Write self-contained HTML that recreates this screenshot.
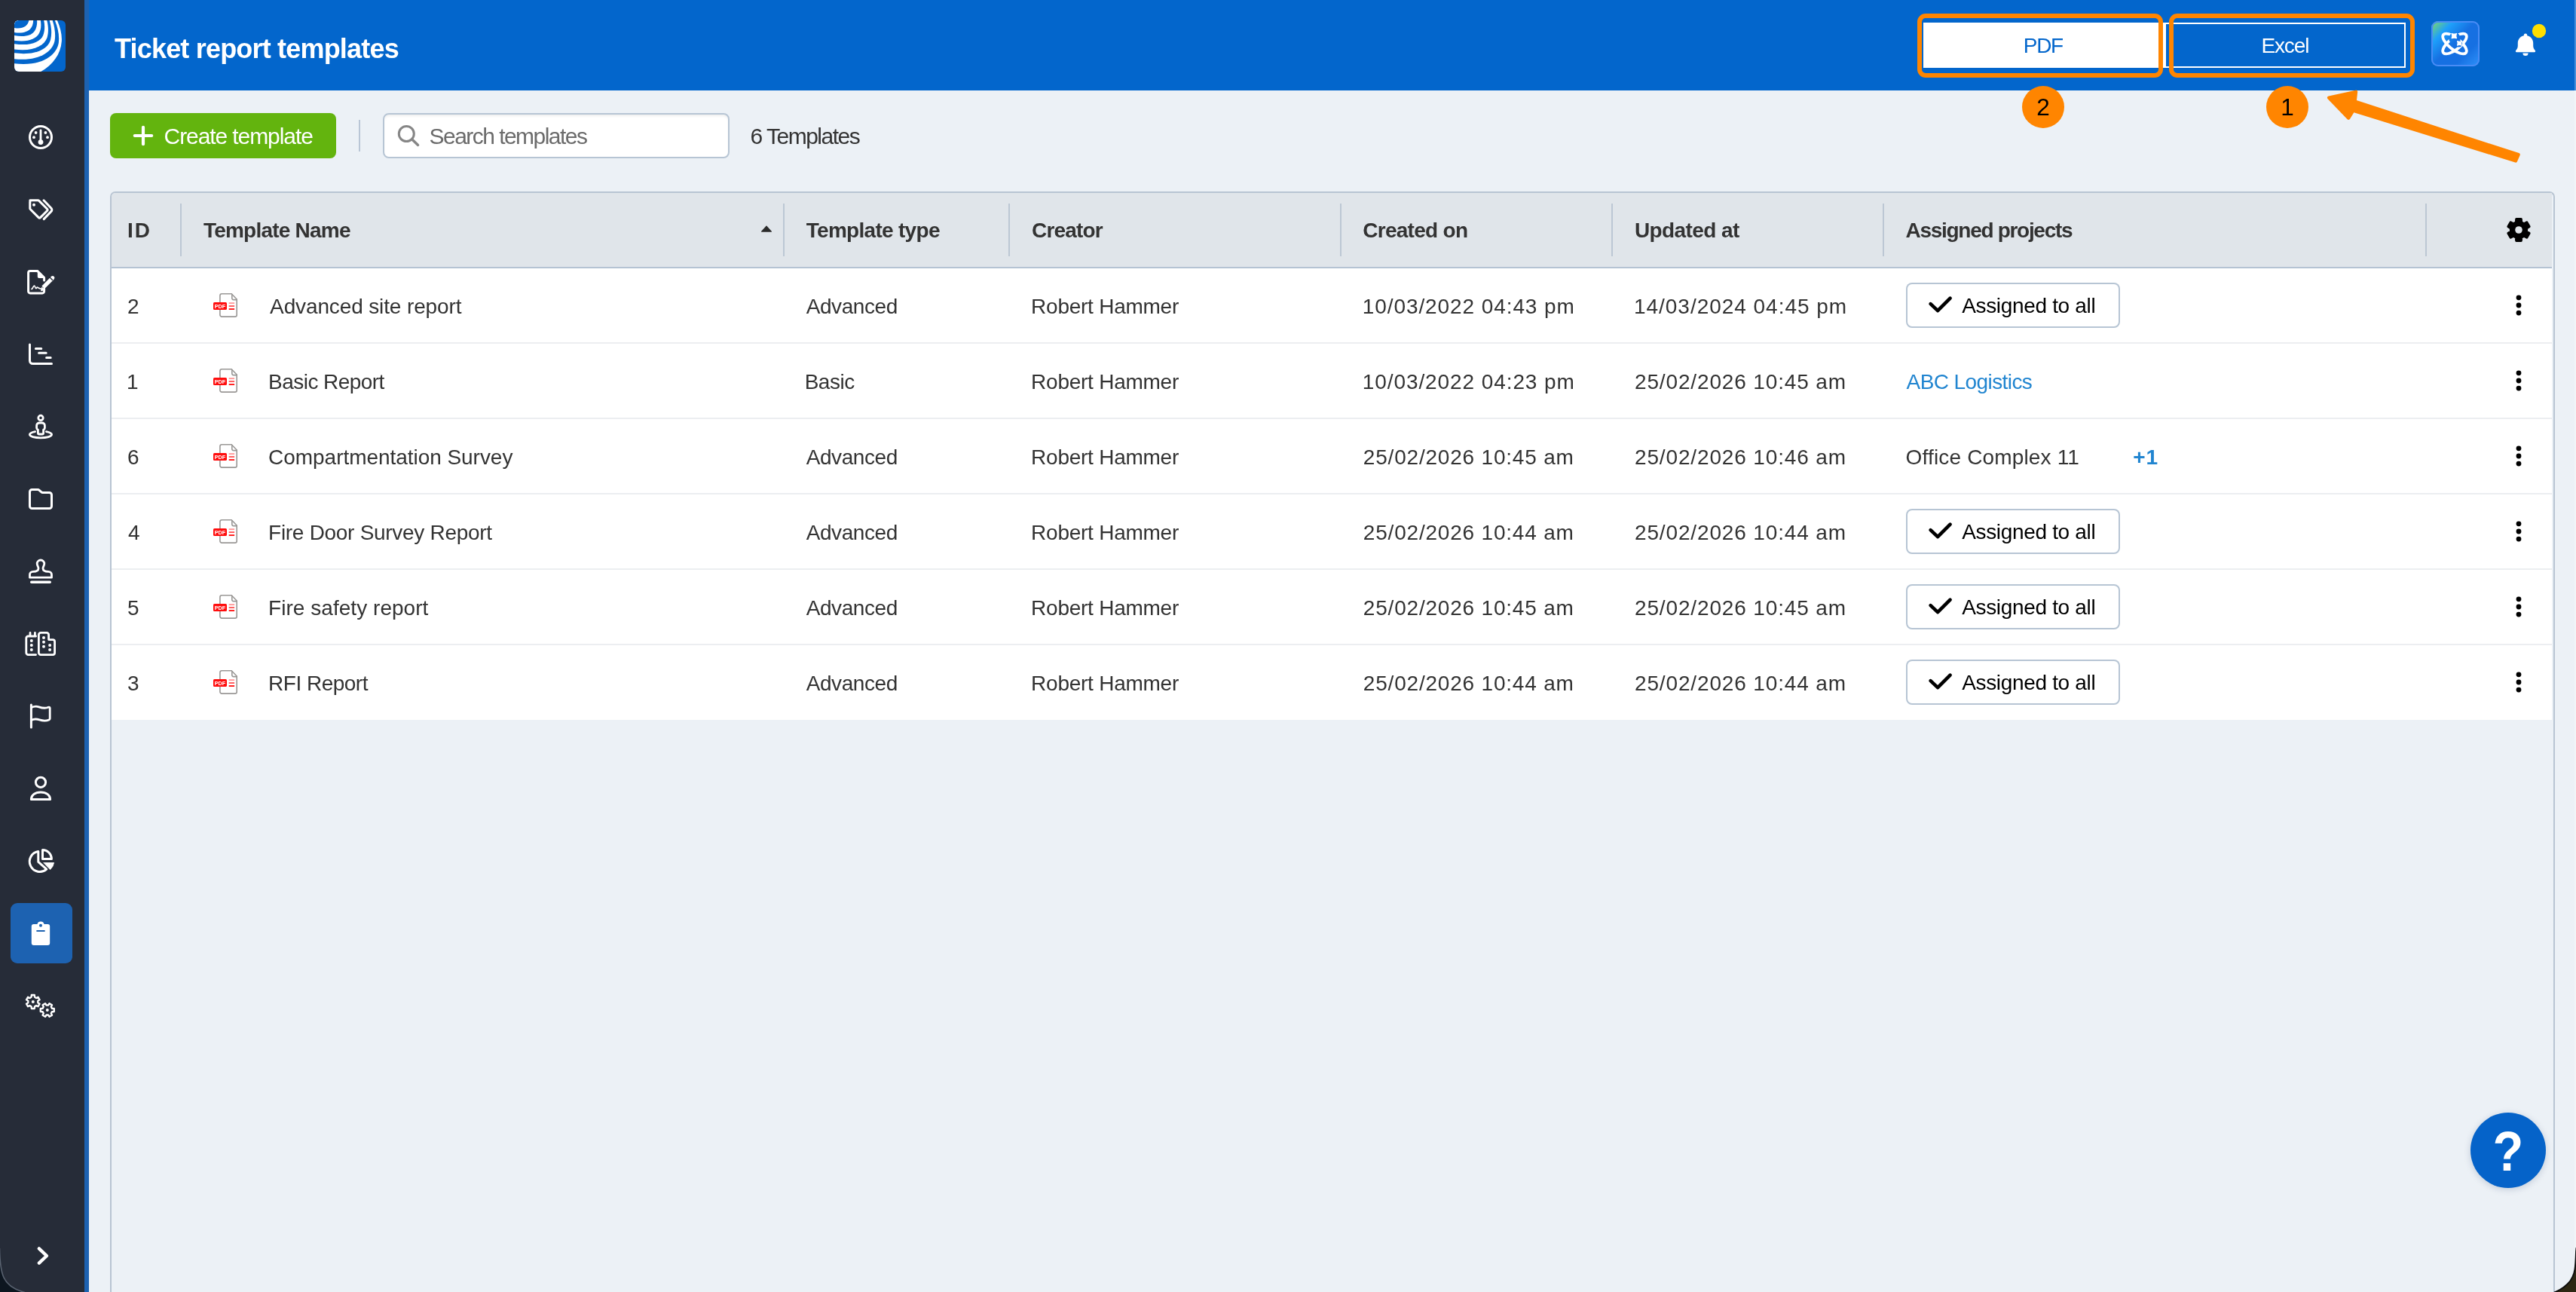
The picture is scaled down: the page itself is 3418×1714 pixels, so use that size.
<!DOCTYPE html>
<html lang="en"><head><meta charset="utf-8"><title>Ticket report templates</title>
<style>
html,body{margin:0;padding:0}
html{width:3418px;height:1714px;overflow:hidden;background:#ecf1f6}
body{width:3418px;height:1714px;position:relative;overflow:hidden;will-change:transform;background:#ecf1f6;font-family:"Liberation Sans",sans-serif}
button{appearance:none;-webkit-appearance:none;border:0;margin:0;padding:0;background:none;font:inherit;color:inherit;text-align:left;position:absolute;display:block;cursor:pointer}
h1{margin:0}
a{text-decoration:none}
main,.toolbar,.ni,.toggle{display:contents}
.a{position:absolute;display:block}
.t{position:absolute;white-space:nowrap;line-height:1;display:block}
#sidebar{left:0;top:0;width:112px;height:1714px;background:#262c38}
#strip{left:112px;top:0;width:6px;height:1714px;background:#1d62b1}
#header{left:118px;top:0;width:3300px;height:120px;background:#0366cc}
#active{left:14px;top:1198px;width:82px;height:80px;border-radius:9px;background:#1d62b1}
#createbtn{left:146px;top:150px;width:300px;height:60px;border-radius:8px;background:#63b40e}
#divider{left:476px;top:159px;width:2px;height:42px;background:#b9c6d6}
#searchbox{left:508px;top:150px;width:460px;height:60px;box-sizing:border-box;border:2px solid #b7c5d4;border-radius:8px;background:#fff;box-shadow:inset 0 3px 4px -2px rgba(0,0,0,.10)}
#q{position:absolute;left:0;top:0;width:456px;height:56px;box-sizing:border-box;border:0;margin:0;padding:0 0 0 60px;background:transparent;outline:0;font:inherit;font-size:30px;color:#333}
#frame{left:146px;top:254px;width:3244px;height:1460px;box-sizing:border-box;border:2px solid #b8c4d2;border-bottom:0;border-radius:7px 7px 0 0}
#thead{left:0;top:0;width:3238px;height:98px;background:#e0e5ea;border-radius:5px 0 0 0}
#theadline{left:0;top:98px;width:3238px;height:2px;background:#b5c3d3}
#tbody{left:0;top:100px;width:3238px;height:599px;background:#fff}
.tr{position:absolute;left:0;width:3238px;height:100px;box-sizing:border-box;border-bottom:2px solid #eceef1}
.tr.last{height:99px;border-bottom:0}
.cs{position:absolute;top:14px;width:2px;height:70px;background:#bcc7d4}
.abtn{width:284px;height:60px;border-radius:8px;background:#fff;box-shadow:inset 0 0 0 2px #b7c5d4}
.kebab{width:20px;height:40px}
#cfg{left:3174px;top:29px;width:40px;height:40px}
#pdfbtn{left:2434px;top:30px;width:320px;height:60px;background:#fff}
#excelbtn{left:2754px;top:30px;width:320px;height:60px;box-shadow:inset 0 0 0 2px #fff}
#aibtn{left:3108px;top:28px;width:64px;height:60px;border-radius:9px;box-shadow:inset 0 0 0 2px #4a8cf5;background:linear-gradient(135deg,#86dd5e 0%,#1ea0fb 24%,#1670e2 48%,#1670e2 72%,#2f93fb 100%)}
#bell{left:3216px;top:30px;width:48px;height:50px}
.obox{position:absolute;top:18px;width:326px;height:85px;box-sizing:border-box;border:6px solid #ff8500;border-radius:11px}
.badge{position:absolute;top:114px;width:56px;height:56px;border-radius:50%;background:#ff8500;color:#000;font-size:31.5px;line-height:57px;text-align:center}
#help{left:3278px;top:1476px;width:100px;height:100px;border-radius:50%;background:#0563c9;box-shadow:0 2px 10px rgba(0,40,90,.18);color:#fff;font-weight:700;font-size:75px;line-height:102px;text-align:center}
#help span{display:inline-block;transform:scaleX(.89)}
#redge{left:3416px;top:0;width:2px;height:1714px;background:rgba(255,255,255,.27)}
</style></head>
<body>

<nav class="a" id="sidebar" aria-label="Main navigation">
<a class="ni" aria-label="Home">
<svg class="a" style="left:19px;top:27px" width="68" height="68" viewBox="0 0 68 68" role="img" aria-label="Logo">
<defs><clipPath id="lc"><rect x="0" y="0" width="68" height="68" rx="6"/></clipPath></defs>
<g clip-path="url(#lc)">
<rect width="68" height="68" fill="#0366cc"/>
<path d="M56.5 -1C61 9 63.5 19 62.8 28C61.5 46 50 60 33.5 69L-1 69L-1 -1Z" fill="#fff"/>
<path d="M53.4 -1C58 10 60 20 58.8 30C56.5 44 40 62 -1 57.1L-1 -1Z" fill="#0366cc"/>
<path d="M50.3 -1C54 10 55 20 53.4 28C50 42 32 55 -1 51.2L-1 -1Z" fill="#fff"/>
<path d="M46.4 -1C49.5 9 50 18 48 26C44 39 27 47 -1 43.2L-1 -1Z" fill="#0366cc"/>
<path d="M43 -1C45.5 8 45.5 16 43.5 23C39.5 34 24 42 -1 38.3L-1 -1Z" fill="#fff"/>
<path d="M39 -1C40.8 7 40.5 14 38.2 20C34 29.5 20 34.5 -1 31L-1 -1Z" fill="#0366cc"/>
<path d="M34.6 -1C36 6 35.5 12 33 17C29 25 17 29.5 -1 26.5L-1 -1Z" fill="#fff"/>
<path d="M30 -1C30.6 5 29.6 10 27 14C23 20 13 23 -1 19.8L-1 -1Z" fill="#0366cc"/>
<path d="M25.2 -1C25.2 4 24 8 21.5 11C17.5 15.5 9 18 -1 15.7L-1 -1Z" fill="#fff"/>
<path d="M19.6 -1C19 3 17.5 5.5 15 7.5C11 10.5 5 11.2 -1 9.7L-1 -1Z" fill="#0366cc"/>
</g></svg></a>
<a class="ni" aria-label="Dashboard"><svg class="a" style="left:32.0px;top:160.0px" width="44" height="44" viewBox="-22.0 -22.0 44 44" fill="none" stroke="#fff" stroke-width="3" stroke-linecap="round" stroke-linejoin="round"><circle cx="0" cy="0" r="14.5"/>
<path d="M0 -9.2V5" stroke-width="2.8"/><circle cx="0" cy="6.6" r="3.4" fill="#fff" stroke="none"/>
<g fill="#fff" stroke="none"><circle cx="-6.4" cy="-6" r="1.9"/><circle cx="6.4" cy="-6" r="1.9"/><circle cx="-9" cy="0.2" r="1.9"/><circle cx="9" cy="0.2" r="1.9"/></g></svg></a>
<a class="ni" aria-label="Tickets"><svg class="a" style="left:32.0px;top:256.0px" width="44" height="44" viewBox="-22.0 -22.0 44 44" fill="none" stroke="#fff" stroke-width="3" stroke-linecap="round" stroke-linejoin="round"><path d="M-14 -12h10.6a2 2 0 0 1 1.4 .6l10.6 10.6a2 2 0 0 1 0 2.8l-8.6 8.6a2 2 0 0 1 -2.8 0l-10.6 -10.6a2 2 0 0 1 -.6 -1.4v-8.600a2 2 0 0 1 2 -2z" transform="translate(-.2,-.2)"/>
<path d="M4 -12.2l10 10.4a3 3 0 0 1 0 4.200l-9.800 10.200"/>
<circle cx="-9" cy="-6.200" r="2" fill="#fff" stroke="none"/></svg></a>
<a class="ni" aria-label="Documents"><svg class="a" style="left:32.0px;top:352.0px" width="44" height="44" viewBox="-22.0 -22.0 44 44" fill="none" stroke="#fff" stroke-width="3" stroke-linecap="round" stroke-linejoin="round"><path d="M4.600 9v3.600a2.400 2.400 0 0 1 -2.400 2.400h-16.200a2.400 2.400 0 0 1 -2.400 -2.400v-24.800a2.400 2.400 0 0 1 2.400 -2.400h9.600l9 9v3.600"/>
<path d="M-4.200 -14.800v7.800a2 2 0 0 0 2 2h7.800z" fill="#fff" stroke="none"/>
<path d="M-12 9.400c1.600 0 2 -4.400 3.400 -4.400 1.200 0 1.200 3.600 2.400 3.600 .8 0 .8 -1.400 1.800 -1.400 .9 0 1.400 1.800 4.800 1.800" stroke-width="1.700"/>
<g transform="translate(0,1.500)"><path d="M3.200 5.800l11.200 -11.200" stroke-width="5.200" stroke-linecap="butt"/>
<path d="M14.200 -5.200l1.600 -1.600" stroke-width="5.200" stroke-linecap="round"/>
<path d="M12.200 -7.400l3.800 3.800" stroke="#262c38" stroke-width="1.400" stroke-linecap="butt"/>
<path d="M0.600 9.800l1 -4.200 3.400 3.400z" fill="#fff" stroke="#fff" stroke-width="1"/></g></svg></a>
<a class="ni" aria-label="Schedule"><svg class="a" style="left:32.0px;top:448.0px" width="44" height="44" viewBox="-22.0 -22.0 44 44" fill="none" stroke="#fff" stroke-width="3" stroke-linecap="round" stroke-linejoin="round"><path d="M-14.500 -13v21.500a4 4 0 0 0 4 4h25"/>
<path d="M-6.600 -7.500h7.400M-2.400 -1.700h9.600M7.600 4.400h5.600" stroke-width="3"/></svg></a>
<a class="ni" aria-label="Site view"><svg class="a" style="left:32.0px;top:544.0px" width="44" height="44" viewBox="-22.0 -22.0 44 44" fill="none" stroke="#fff" stroke-width="3" stroke-linecap="round" stroke-linejoin="round"><circle cx="0" cy="-11.600" r="3.200" stroke-width="2.800"/>
<path d="M-5.400 -1.400a3.600 3.600 0 0 1 3.600 -3.600h3.600a3.600 3.600 0 0 1 3.600 3.600v3.200a2.600 2.600 0 0 1 -1.800 2.400v4.200a1.600 1.600 0 0 1 -1.600 1.600h-4a1.600 1.600 0 0 1 -1.600 -1.600v-4.200a2.600 2.600 0 0 1 -1.800 -2.400z" stroke-width="2.800"/>
<path d="M-7.400 6.600c-4.200 .8 -7.200 2.200 -7.200 4 0 2.400 6.500 4.200 14.600 4.200s14.600 -1.800 14.600 -4.200c0 -1.800 -3 -3.200 -7.200 -4" stroke-width="2.800"/></svg></a>
<a class="ni" aria-label="Projects"><svg class="a" style="left:32.0px;top:640.0px" width="44" height="44" viewBox="-22.0 -22.0 44 44" fill="none" stroke="#fff" stroke-width="3" stroke-linecap="round" stroke-linejoin="round"><path d="M-14.500 -9.500a3 3 0 0 1 3 -3h7.600a3 3 0 0 1 2 .8l2.600 2.400a3 3 0 0 0 2 .8h8.800a3 3 0 0 1 3 3v15a3 3 0 0 1 -3 3h-23a3 3 0 0 1 -3 -3z"/></svg></a>
<a class="ni" aria-label="Approvals"><svg class="a" style="left:32.0px;top:736.0px" width="44" height="44" viewBox="-22.0 -22.0 44 44" fill="none" stroke="#fff" stroke-width="3" stroke-linecap="round" stroke-linejoin="round"><path d="M-10.500 0.400c5.500 0 7.500 -1.600 7.500 -4.400 0 -2.200 -1.800 -3.600 -1.800 -6.200a4.800 4.800 0 0 1 9.600 0c0 2.600 -1.800 4 -1.800 6.200 0 2.800 2 4.400 7.500 4.400a4 4 0 0 1 4 4v3.800h-29v-3.800a4 4 0 0 1 4 -4z" stroke-width="2.800"/>
<path d="M-12.200 14.200h24.400" stroke-width="3.600"/></svg></a>
<a class="ni" aria-label="Companies"><svg class="a" style="left:32.0px;top:832.0px" width="44" height="44" viewBox="-22.0 -22.0 44 44" fill="none" stroke="#fff" stroke-width="3" stroke-linecap="round" stroke-linejoin="round"><path d="M-6.400 14.600h-10.200a2.600 2.600 0 0 1 -2.600 -2.600v-19.400a2.600 2.600 0 0 1 2.600 -2.600h10.200M-14 -10v-4.600M-7.600 -10v-4.600" stroke-width="2.800"/>
<path d="M-2.600 -12a2.600 2.600 0 0 1 2.600 -2.600h8a2.600 2.600 0 0 1 2.600 2.600v6.600h5.400a2.600 2.600 0 0 1 2.600 2.600v14.800a2.600 2.600 0 0 1 -2.600 2.600h-16a2.600 2.600 0 0 1 -2.600 -2.600z" stroke-width="2.800"/>
<g fill="#fff" stroke="none"><circle cx="-12.200" cy="-4" r="2"/><circle cx="-12.200" cy="2" r="2"/><circle cx="-12.200" cy="8" r="2"/><circle cx="4" cy="-8" r="2"/><circle cx="4" cy="-2.300" r="2"/><circle cx="4" cy="3.800" r="2"/><circle cx="12.100" cy="2" r="2"/><circle cx="12.100" cy="8" r="2"/></g></svg></a>
<a class="ni" aria-label="Reports"><svg class="a" style="left:32.0px;top:928.0px" width="44" height="44" viewBox="-22.0 -22.0 44 44" fill="none" stroke="#fff" stroke-width="3" stroke-linecap="round" stroke-linejoin="round"><path d="M-12.600 -15v30"/>
<path d="M-12.600 -11.400c3.200 -1.400 6.600 -2 10.200 -.8 3.800 1.300 7.800 2.600 12.600 .4a1.400 1.400 0 0 1 2 1.200v13.800a2 2 0 0 1 -1.200 1.800c-4.800 2 -8.800 1.200 -12.600 -.1 -3.600 -1.200 -7.200 -1.400 -11 .5" stroke-width="2.800"/></svg></a>
<a class="ni" aria-label="Users"><svg class="a" style="left:32.0px;top:1024.0px" width="44" height="44" viewBox="-22.0 -22.0 44 44" fill="none" stroke="#fff" stroke-width="3" stroke-linecap="round" stroke-linejoin="round"><circle cx="0" cy="-8.200" r="6.600"/>
<path d="M-12.600 14.500c0 -5.400 5 -9.600 12.600 -9.600s12.600 4.200 12.600 9.600z"/></svg></a>
<a class="ni" aria-label="Statistics"><svg class="a" style="left:32.0px;top:1120.0px" width="44" height="44" viewBox="-22.0 -22.0 44 44" fill="none" stroke="#fff" stroke-width="3" stroke-linecap="round" stroke-linejoin="round"><path d="M-3.2 -12.5A13.6 13.6 0 1 0 7.8 11.2L-3.2 1.4Z" stroke-width="3"/>
<path d="M2.5 -2.6V-14.5A11.9 11.9 0 0 1 14.4 -2.6Z" stroke-width="3"/>
<path d="M4.1 2.5H17.6A15.6 15.6 0 0 1 12.8 11.4Z" fill="#fff" stroke-width=".8"/></svg></a>
<a class="ni" aria-label="Report templates" aria-current="page">
<span class="a" id="active"></span>
<svg class="a" style="left:34px;top:1218px" width="40" height="40" viewBox="0 0 40 40">
<path d="M10.8 8h4.6a4.8 4.8 0 0 1 9.2 0h4.6a3 3 0 0 1 3 3v22a3 3 0 0 1 -3 3h-18.4a3 3 0 0 1 -3 -3v-22a3 3 0 0 1 3 -3z" fill="#fff"/>
<circle cx="20" cy="9.8" r="2" fill="#1d62b1"/><rect x="14.4" y="16" width="11.2" height="2" fill="#1d62b1"/></svg></a>
<a class="ni" aria-label="Settings"><svg class="a" style="left:30.0px;top:1310.0px" width="48" height="48" viewBox="-24.0 -24.0 48 48" fill="none" stroke="#fff" stroke-width="3" stroke-linecap="round" stroke-linejoin="round"><path d="M-12.40 -11.22 L-12.19 -13.98 L-8.21 -13.98 L-8.00 -11.22 L-5.91 -10.02 L-3.41 -11.21 L-1.43 -7.77 L-3.71 -6.20 L-3.71 -3.80 L-1.43 -2.23 L-3.41 1.21 L-5.91 0.02 L-8.00 1.22 L-8.21 3.98 L-12.19 3.98 L-12.40 1.22 L-14.49 0.02 L-16.99 1.21 L-18.97 -2.23 L-16.69 -3.80 L-16.69 -6.20 L-18.97 -7.77 L-16.99 -11.21 L-14.49 -10.02Z" stroke-width="2.400"/><circle cx="-10.200" cy="-5" r="2" fill="#fff" stroke="none"/>
<path d="M6.60 -0.22 L6.81 -2.98 L10.79 -2.98 L11.00 -0.22 L13.09 0.98 L15.59 -0.21 L17.57 3.23 L15.29 4.80 L15.29 7.20 L17.57 8.77 L15.59 12.21 L13.09 11.02 L11.00 12.22 L10.79 14.98 L6.81 14.98 L6.60 12.22 L4.51 11.02 L2.01 12.21 L0.03 8.77 L2.31 7.20 L2.31 4.80 L0.03 3.23 L2.01 -0.21 L4.51 0.98Z" stroke-width="2.400" transform="rotate(30 8.800 6)"/><circle cx="8.800" cy="6" r="2" fill="#fff" stroke="none"/></svg></a>
<button type="button" aria-label="Expand sidebar" style="left:44px;top:1648px;width:26px;height:36px"><svg class="a" style="left:0;top:0" width="26" height="36" viewBox="0 0 26 36"><path d="M7.8 8.4l10.2 9.6-10.2 9.6" fill="none" stroke="#fff" stroke-width="4.4" stroke-linecap="round" stroke-linejoin="round"/></svg></button>
</nav>
<div class="a" id="strip"></div>

<header class="a" id="header">
<h1 class="t" id="title" style="left:34.00px;top:46.53px;font-size:36px;font-weight:700;color:#fff;letter-spacing:-0.809px">Ticket report templates</h1>
<div class="toggle" role="group" aria-label="Report format">
<button type="button" id="pdfbtn" aria-pressed="true"><span class="t" id="pdf" style="left:132.80px;top:17.10px;font-size:28px;font-weight:400;color:#0366cc;letter-spacing:-1.300px">PDF</span></button>
<button type="button" id="excelbtn" aria-pressed="false"><span class="t" id="excel" style="left:128.40px;top:17.10px;font-size:28px;font-weight:400;color:#fff;letter-spacing:-1.100px">Excel</span></button>
</div>
<button type="button" id="aibtn" aria-label="AI assistant">
<svg class="a" style="left:9.4px;top:8px" width="44" height="44" viewBox="-22 -22 44 44">
<defs><mask id="aim" maskUnits="userSpaceOnUse" x="-22" y="-22" width="44" height="44"><rect x="-22" y="-22" width="44" height="44" fill="#fff"/><circle cx="0" cy="-7" r="7.8" fill="#000"/><circle cx="5.6" cy="0" r="4.6" fill="#000"/></mask></defs>
<g mask="url(#aim)" fill="none" stroke="#fff" stroke-width="3.8"><ellipse rx="19.2" ry="7.7" transform="rotate(38.5)"/><ellipse rx="19.2" ry="7.7" transform="rotate(-38.5)"/></g>
<path d="M0 -4.3Q1.3 -1.3 4.3 0Q1.3 1.3 0 4.3Q-1.3 1.3 -4.3 0Q-1.3 -1.3 0 -4.3Z" fill="#fff" stroke="#fff" stroke-width="1.4" stroke-linejoin="round" transform="translate(-.7,-10.4) rotate(45)"/>
<path d="M0 -3.9Q1 -1 3.9 0Q1 1 0 3.9Q-1 1 -3.9 0Q-1 -1 0 -3.9Z" fill="#fff" stroke="#fff" stroke-width="1.2" stroke-linejoin="round" transform="translate(6.4,-.6) rotate(45)"/>
</svg></button>
<button type="button" id="bell" aria-label="Notifications">
<svg class="a" style="left:0;top:10px" width="36" height="38" viewBox="0 0 36 38"><path d="M17 4.4a2.2 2.2 0 0 1 2.2 2.2v.6c4.800 1 8 5 8 10v3.6c0 2.6 1 4.4 2.6 6.2a1.3 1.3 0 0 1 -1 2.2h-23.6a1.3 1.3 0 0 1 -1 -2.2c1.6 -1.8 2.6 -3.6 2.6 -6.2v-3.6c0 -5 3.200 -9 8 -10v-.6a2.2 2.2 0 0 1 2.2 -2.2zM13.4 30.4h7.2a3.6 3.6 0 0 1 -7.2 0z" fill="#fff"/></svg>
<svg class="a" style="left:24px;top:0" width="22" height="22" viewBox="0 0 22 22"><circle cx="11" cy="11" r="9.2" fill="#ffdf00"/></svg>
</button>
</header>

<main>
<div class="toolbar">
<button type="button" id="createbtn"><svg class="a" style="left:29px;top:15px" width="30" height="30" viewBox="0 0 30 30"><path d="M15 3.8v22.4M3.8 15h22.4" stroke="#fff" stroke-width="4.2" stroke-linecap="round"/></svg><span class="t" id="create" style="left:71.60px;top:15.80px;font-size:30px;font-weight:400;color:#fff;letter-spacing:-1.086px">Create template</span></button>
<div class="a" id="divider"></div>
<div class="a" id="searchbox" role="search">
<svg class="a" style="left:14px;top:10px" width="36" height="36" viewBox="0 0 36 36"><circle cx="15.3" cy="15.5" r="10" fill="none" stroke="#868686" stroke-width="3"/><path d="M22.6 22.8l8 7.6" stroke="#868686" stroke-width="3.4" stroke-linecap="round"/></svg>
<label class="t" id="search" for="q" style="left:59.50px;top:14.10px;font-size:30px;font-weight:400;color:#6b6b6b;letter-spacing:-1.534px">Search templates</label>
<input id="q" type="text" autocomplete="off">
</div>
<span class="t" id="count" style="left:995.40px;top:166.10px;font-size:30px;font-weight:400;color:#333;letter-spacing:-1.480px">6 Templates</span>
</div>

<div class="a" id="frame" role="table" aria-label="Ticket report templates">
<div class="a" id="thead" role="row">
<span class="t" id="h_id" role="columnheader" style="left:21.00px;top:36.00px;font-size:28px;font-weight:700;color:#333;letter-spacing:2.000px">ID</span>
<span class="t" id="h_name" role="columnheader" aria-sort="ascending" style="left:121.90px;top:36.00px;font-size:28px;font-weight:700;color:#333;letter-spacing:-0.769px">Template Name</span>
<svg class="a" style="left:860px;top:41px" width="18" height="14" viewBox="0 0 18 14"><path d="M9 2.2l6.8 7.6a.6 .6 0 0 1 -.4 1h-12.8a.6 .6 0 0 1 -.4 -1z" fill="#2b2b2b"/></svg>
<span class="t" id="h_type" role="columnheader" style="left:921.70px;top:36.00px;font-size:28px;font-weight:700;color:#333;letter-spacing:-0.702px">Template type</span>
<span class="t" id="h_creator" role="columnheader" style="left:1221.10px;top:36.00px;font-size:28px;font-weight:700;color:#333;letter-spacing:-0.834px">Creator</span>
<span class="t" id="h_created" role="columnheader" style="left:1660.20px;top:36.00px;font-size:28px;font-weight:700;color:#333;letter-spacing:-0.714px">Created on</span>
<span class="t" id="h_updated" role="columnheader" style="left:2021.00px;top:36.00px;font-size:28px;font-weight:700;color:#333;letter-spacing:-0.603px">Updated at</span>
<span class="t" id="h_assigned" role="columnheader" style="left:2380.60px;top:36.00px;font-size:28px;font-weight:700;color:#333;letter-spacing:-1.302px">Assigned projects</span>
<i class="cs" style="left:91px"></i><i class="cs" style="left:891px"></i><i class="cs" style="left:1190px"></i><i class="cs" style="left:1630px"></i><i class="cs" style="left:1990px"></i><i class="cs" style="left:2350px"></i><i class="cs" style="left:3070px"></i>
<button type="button" id="cfg" aria-label="Configure columns"><svg class="a" style="left:0;top:0" width="40" height="40" viewBox="0 0 40 40"><path d="M16.62 9.95 L16.82 5.75 L23.18 5.75 L23.38 9.95 L27.01 12.05 L30.75 10.12 L33.93 15.63 L30.39 17.90 L30.39 22.10 L33.93 24.37 L30.75 29.88 L27.01 27.95 L23.38 30.05 L23.18 34.25 L16.82 34.25 L16.62 30.05 L12.99 27.95 L9.25 29.88 L6.07 24.37 L9.61 22.10 L9.61 17.90 L6.07 15.63 L9.25 10.12 L12.99 12.05Z" fill="#000" stroke="#000" stroke-width="3.4" stroke-linejoin="round"/><circle cx="20" cy="20" r="4.8" fill="#e0e5ea"/></svg></button>
</div>
<div class="a" id="theadline"></div>
<div class="a" id="tbody" role="rowgroup">
<div class="tr" role="row" style="top:0px">
<span class="t" id="r0_id" role="cell" style="left:21.00px;top:36.60px;font-size:28px;font-weight:400;color:#333;letter-spacing:0.000px">2</span>
<svg class="a" style="left:134px;top:31px" width="36" height="36" viewBox="0 0 36 36" role="img" aria-label="PDF template">
<path d="M12.3 2.8h12.9l7 7.2v20.7a2.4 2.4 0 0 1-2.4 2.4h-17.5a2.4 2.4 0 0 1-2.4-2.4v-25.5a2.4 2.4 0 0 1 2.4-2.4z" fill="#fff" stroke="#9a9896" stroke-width="1.6"/>
<path d="M25.8 3v5.6a2 2 0 0 0 2 2h4.6" fill="none" stroke="#9a9896" stroke-width="1.6"/>
<rect x="1" y="13.9" width="18" height="10.2" rx="1.6" fill="#ff0d0d"/>
<text x="10" y="21.7" font-family="Liberation Sans, sans-serif" font-size="7.6" font-weight="700" fill="#fff" text-anchor="middle" textLength="14.6" lengthAdjust="spacingAndGlyphs">PDF</text>
<rect x="21.7" y="14.2" width="7.4" height="1.9" fill="#ff9a9a"/>
<rect x="21.7" y="18.1" width="7.4" height="1.9" fill="#ff5a5a"/>
<rect x="21.7" y="22.1" width="7.4" height="1.9" fill="#ff1a1a"/>
</svg>
<span class="t" id="r0_name" role="cell" style="left:210.10px;top:36.60px;font-size:28px;font-weight:400;color:#333;letter-spacing:-0.130px">Advanced site report</span>
<span class="t" id="r0_type" role="cell" style="left:921.70px;top:36.60px;font-size:28px;font-weight:400;color:#333;letter-spacing:-0.429px">Advanced</span>
<span class="t" id="r0_creator" role="cell" style="left:1220.10px;top:36.60px;font-size:28px;font-weight:400;color:#333;letter-spacing:-0.250px">Robert Hammer</span>
<span class="t" id="r0_created" role="cell" style="left:1659.80px;top:36.60px;font-size:28px;font-weight:400;color:#333;letter-spacing:0.911px">10/03/2022 04:43 pm</span>
<span class="t" id="r0_updated" role="cell" style="left:2020.00px;top:36.60px;font-size:28px;font-weight:400;color:#333;letter-spacing:0.967px">14/03/2024 04:45 pm</span>
<button type="button" class="abtn" style="left:2381px;top:19px"><svg class="a" style="left:27px;top:16px" width="38" height="28" viewBox="0 0 38 28"><path d="M5.6 12.2l9.5 9 16.5-16.6" fill="none" stroke="#000" stroke-width="4.6" stroke-linecap="round" stroke-linejoin="round"/></svg><span class="t" id="r0_as" style="left:74.20px;top:16.80px;font-size:28px;font-weight:400;color:#000;letter-spacing:-0.331px">Assigned to all</span></button>
<button type="button" class="kebab" aria-label="Row actions" style="left:3184px;top:29px"><svg class="a" style="left:0;top:0" width="20" height="40" viewBox="0 0 20 40"><circle cx="10" cy="9.8" r="3.4"/><circle cx="10" cy="20" r="3.4"/><circle cx="10" cy="30.1" r="3.4"/></svg></button>
</div>
<div class="tr" role="row" style="top:100px">
<span class="t" id="r1_id" role="cell" style="left:20.00px;top:36.60px;font-size:28px;font-weight:400;color:#333;letter-spacing:0.000px">1</span>
<svg class="a" style="left:134px;top:31px" width="36" height="36" viewBox="0 0 36 36" role="img" aria-label="PDF template">
<path d="M12.3 2.8h12.9l7 7.2v20.7a2.4 2.4 0 0 1-2.4 2.4h-17.5a2.4 2.4 0 0 1-2.4-2.4v-25.5a2.4 2.4 0 0 1 2.4-2.4z" fill="#fff" stroke="#9a9896" stroke-width="1.6"/>
<path d="M25.8 3v5.6a2 2 0 0 0 2 2h4.6" fill="none" stroke="#9a9896" stroke-width="1.6"/>
<rect x="1" y="13.9" width="18" height="10.2" rx="1.6" fill="#ff0d0d"/>
<text x="10" y="21.7" font-family="Liberation Sans, sans-serif" font-size="7.6" font-weight="700" fill="#fff" text-anchor="middle" textLength="14.6" lengthAdjust="spacingAndGlyphs">PDF</text>
<rect x="21.7" y="14.2" width="7.4" height="1.9" fill="#ff9a9a"/>
<rect x="21.7" y="18.1" width="7.4" height="1.9" fill="#ff5a5a"/>
<rect x="21.7" y="22.1" width="7.4" height="1.9" fill="#ff1a1a"/>
</svg>
<span class="t" id="r1_name" role="cell" style="left:208.10px;top:36.60px;font-size:28px;font-weight:400;color:#333;letter-spacing:-0.546px">Basic Report</span>
<span class="t" id="r1_type" role="cell" style="left:919.70px;top:36.60px;font-size:28px;font-weight:400;color:#333;letter-spacing:-0.500px">Basic</span>
<span class="t" id="r1_creator" role="cell" style="left:1220.10px;top:36.60px;font-size:28px;font-weight:400;color:#333;letter-spacing:-0.250px">Robert Hammer</span>
<span class="t" id="r1_created" role="cell" style="left:1659.80px;top:36.60px;font-size:28px;font-weight:400;color:#333;letter-spacing:0.911px">10/03/2022 04:23 pm</span>
<span class="t" id="r1_updated" role="cell" style="left:2021.00px;top:36.60px;font-size:28px;font-weight:400;color:#333;letter-spacing:0.855px">25/02/2026 10:45 am</span>
<a class="t" id="r1_as" role="cell" style="left:2381.60px;top:36.60px;font-size:28px;font-weight:400;color:#2185d0;letter-spacing:-0.585px">ABC Logistics</a>
<button type="button" class="kebab" aria-label="Row actions" style="left:3184px;top:29px"><svg class="a" style="left:0;top:0" width="20" height="40" viewBox="0 0 20 40"><circle cx="10" cy="9.8" r="3.4"/><circle cx="10" cy="20" r="3.4"/><circle cx="10" cy="30.1" r="3.4"/></svg></button>
</div>
<div class="tr" role="row" style="top:200px">
<span class="t" id="r2_id" role="cell" style="left:21.00px;top:36.60px;font-size:28px;font-weight:400;color:#333;letter-spacing:0.000px">6</span>
<svg class="a" style="left:134px;top:31px" width="36" height="36" viewBox="0 0 36 36" role="img" aria-label="PDF template">
<path d="M12.3 2.8h12.9l7 7.2v20.7a2.4 2.4 0 0 1-2.4 2.4h-17.5a2.4 2.4 0 0 1-2.4-2.4v-25.5a2.4 2.4 0 0 1 2.4-2.4z" fill="#fff" stroke="#9a9896" stroke-width="1.6"/>
<path d="M25.8 3v5.6a2 2 0 0 0 2 2h4.6" fill="none" stroke="#9a9896" stroke-width="1.6"/>
<rect x="1" y="13.9" width="18" height="10.2" rx="1.6" fill="#ff0d0d"/>
<text x="10" y="21.7" font-family="Liberation Sans, sans-serif" font-size="7.6" font-weight="700" fill="#fff" text-anchor="middle" textLength="14.6" lengthAdjust="spacingAndGlyphs">PDF</text>
<rect x="21.7" y="14.2" width="7.4" height="1.9" fill="#ff9a9a"/>
<rect x="21.7" y="18.1" width="7.4" height="1.9" fill="#ff5a5a"/>
<rect x="21.7" y="22.1" width="7.4" height="1.9" fill="#ff1a1a"/>
</svg>
<span class="t" id="r2_name" role="cell" style="left:208.10px;top:36.60px;font-size:28px;font-weight:400;color:#333;letter-spacing:-0.044px">Compartmentation Survey</span>
<span class="t" id="r2_type" role="cell" style="left:921.70px;top:36.60px;font-size:28px;font-weight:400;color:#333;letter-spacing:-0.429px">Advanced</span>
<span class="t" id="r2_creator" role="cell" style="left:1220.10px;top:36.60px;font-size:28px;font-weight:400;color:#333;letter-spacing:-0.250px">Robert Hammer</span>
<span class="t" id="r2_created" role="cell" style="left:1660.80px;top:36.60px;font-size:28px;font-weight:400;color:#333;letter-spacing:0.802px">25/02/2026 10:45 am</span>
<span class="t" id="r2_updated" role="cell" style="left:2021.00px;top:36.60px;font-size:28px;font-weight:400;color:#333;letter-spacing:0.855px">25/02/2026 10:46 am</span>
<span class="t" id="r2_as" role="cell" style="left:2380.60px;top:36.60px;font-size:28px;font-weight:400;color:#333;letter-spacing:0.163px">Office Complex 11</span>
<a class="t" id="r2_plus" style="left:2682.20px;top:36.60px;font-size:28px;font-weight:700;color:#2185d0;letter-spacing:1.000px">+1</a>
<button type="button" class="kebab" aria-label="Row actions" style="left:3184px;top:29px"><svg class="a" style="left:0;top:0" width="20" height="40" viewBox="0 0 20 40"><circle cx="10" cy="9.8" r="3.4"/><circle cx="10" cy="20" r="3.4"/><circle cx="10" cy="30.1" r="3.4"/></svg></button>
</div>
<div class="tr" role="row" style="top:300px">
<span class="t" id="r3_id" role="cell" style="left:22.00px;top:36.60px;font-size:28px;font-weight:400;color:#333;letter-spacing:0.000px">4</span>
<svg class="a" style="left:134px;top:31px" width="36" height="36" viewBox="0 0 36 36" role="img" aria-label="PDF template">
<path d="M12.3 2.8h12.9l7 7.2v20.7a2.4 2.4 0 0 1-2.4 2.4h-17.5a2.4 2.4 0 0 1-2.4-2.4v-25.5a2.4 2.4 0 0 1 2.4-2.4z" fill="#fff" stroke="#9a9896" stroke-width="1.6"/>
<path d="M25.8 3v5.6a2 2 0 0 0 2 2h4.6" fill="none" stroke="#9a9896" stroke-width="1.6"/>
<rect x="1" y="13.9" width="18" height="10.2" rx="1.6" fill="#ff0d0d"/>
<text x="10" y="21.7" font-family="Liberation Sans, sans-serif" font-size="7.6" font-weight="700" fill="#fff" text-anchor="middle" textLength="14.6" lengthAdjust="spacingAndGlyphs">PDF</text>
<rect x="21.7" y="14.2" width="7.4" height="1.9" fill="#ff9a9a"/>
<rect x="21.7" y="18.1" width="7.4" height="1.9" fill="#ff5a5a"/>
<rect x="21.7" y="22.1" width="7.4" height="1.9" fill="#ff1a1a"/>
</svg>
<span class="t" id="r3_name" role="cell" style="left:208.10px;top:36.60px;font-size:28px;font-weight:400;color:#333;letter-spacing:-0.293px">Fire Door Survey Report</span>
<span class="t" id="r3_type" role="cell" style="left:921.70px;top:36.60px;font-size:28px;font-weight:400;color:#333;letter-spacing:-0.429px">Advanced</span>
<span class="t" id="r3_creator" role="cell" style="left:1220.10px;top:36.60px;font-size:28px;font-weight:400;color:#333;letter-spacing:-0.250px">Robert Hammer</span>
<span class="t" id="r3_created" role="cell" style="left:1660.80px;top:36.60px;font-size:28px;font-weight:400;color:#333;letter-spacing:0.802px">25/02/2026 10:44 am</span>
<span class="t" id="r3_updated" role="cell" style="left:2021.00px;top:36.60px;font-size:28px;font-weight:400;color:#333;letter-spacing:0.855px">25/02/2026 10:44 am</span>
<button type="button" class="abtn" style="left:2381px;top:19px"><svg class="a" style="left:27px;top:16px" width="38" height="28" viewBox="0 0 38 28"><path d="M5.6 12.2l9.5 9 16.5-16.6" fill="none" stroke="#000" stroke-width="4.6" stroke-linecap="round" stroke-linejoin="round"/></svg><span class="t" id="r3_as" style="left:74.20px;top:16.80px;font-size:28px;font-weight:400;color:#000;letter-spacing:-0.331px">Assigned to all</span></button>
<button type="button" class="kebab" aria-label="Row actions" style="left:3184px;top:29px"><svg class="a" style="left:0;top:0" width="20" height="40" viewBox="0 0 20 40"><circle cx="10" cy="9.8" r="3.4"/><circle cx="10" cy="20" r="3.4"/><circle cx="10" cy="30.1" r="3.4"/></svg></button>
</div>
<div class="tr" role="row" style="top:400px">
<span class="t" id="r4_id" role="cell" style="left:21.00px;top:36.60px;font-size:28px;font-weight:400;color:#333;letter-spacing:0.000px">5</span>
<svg class="a" style="left:134px;top:31px" width="36" height="36" viewBox="0 0 36 36" role="img" aria-label="PDF template">
<path d="M12.3 2.8h12.9l7 7.2v20.7a2.4 2.4 0 0 1-2.4 2.4h-17.5a2.4 2.4 0 0 1-2.4-2.4v-25.5a2.4 2.4 0 0 1 2.4-2.4z" fill="#fff" stroke="#9a9896" stroke-width="1.6"/>
<path d="M25.8 3v5.6a2 2 0 0 0 2 2h4.6" fill="none" stroke="#9a9896" stroke-width="1.6"/>
<rect x="1" y="13.9" width="18" height="10.2" rx="1.6" fill="#ff0d0d"/>
<text x="10" y="21.7" font-family="Liberation Sans, sans-serif" font-size="7.6" font-weight="700" fill="#fff" text-anchor="middle" textLength="14.6" lengthAdjust="spacingAndGlyphs">PDF</text>
<rect x="21.7" y="14.2" width="7.4" height="1.9" fill="#ff9a9a"/>
<rect x="21.7" y="18.1" width="7.4" height="1.9" fill="#ff5a5a"/>
<rect x="21.7" y="22.1" width="7.4" height="1.9" fill="#ff1a1a"/>
</svg>
<span class="t" id="r4_name" role="cell" style="left:208.10px;top:36.60px;font-size:28px;font-weight:400;color:#333;letter-spacing:0.038px">Fire safety report</span>
<span class="t" id="r4_type" role="cell" style="left:921.70px;top:36.60px;font-size:28px;font-weight:400;color:#333;letter-spacing:-0.429px">Advanced</span>
<span class="t" id="r4_creator" role="cell" style="left:1220.10px;top:36.60px;font-size:28px;font-weight:400;color:#333;letter-spacing:-0.250px">Robert Hammer</span>
<span class="t" id="r4_created" role="cell" style="left:1660.80px;top:36.60px;font-size:28px;font-weight:400;color:#333;letter-spacing:0.802px">25/02/2026 10:45 am</span>
<span class="t" id="r4_updated" role="cell" style="left:2021.00px;top:36.60px;font-size:28px;font-weight:400;color:#333;letter-spacing:0.855px">25/02/2026 10:45 am</span>
<button type="button" class="abtn" style="left:2381px;top:19px"><svg class="a" style="left:27px;top:16px" width="38" height="28" viewBox="0 0 38 28"><path d="M5.6 12.2l9.5 9 16.5-16.6" fill="none" stroke="#000" stroke-width="4.6" stroke-linecap="round" stroke-linejoin="round"/></svg><span class="t" id="r4_as" style="left:74.20px;top:16.80px;font-size:28px;font-weight:400;color:#000;letter-spacing:-0.331px">Assigned to all</span></button>
<button type="button" class="kebab" aria-label="Row actions" style="left:3184px;top:29px"><svg class="a" style="left:0;top:0" width="20" height="40" viewBox="0 0 20 40"><circle cx="10" cy="9.8" r="3.4"/><circle cx="10" cy="20" r="3.4"/><circle cx="10" cy="30.1" r="3.4"/></svg></button>
</div>
<div class="tr last" role="row" style="top:500px">
<span class="t" id="r5_id" role="cell" style="left:21.00px;top:36.60px;font-size:28px;font-weight:400;color:#333;letter-spacing:0.000px">3</span>
<svg class="a" style="left:134px;top:31px" width="36" height="36" viewBox="0 0 36 36" role="img" aria-label="PDF template">
<path d="M12.3 2.8h12.9l7 7.2v20.7a2.4 2.4 0 0 1-2.4 2.4h-17.5a2.4 2.4 0 0 1-2.4-2.4v-25.5a2.4 2.4 0 0 1 2.4-2.4z" fill="#fff" stroke="#9a9896" stroke-width="1.6"/>
<path d="M25.8 3v5.6a2 2 0 0 0 2 2h4.6" fill="none" stroke="#9a9896" stroke-width="1.6"/>
<rect x="1" y="13.9" width="18" height="10.2" rx="1.6" fill="#ff0d0d"/>
<text x="10" y="21.7" font-family="Liberation Sans, sans-serif" font-size="7.6" font-weight="700" fill="#fff" text-anchor="middle" textLength="14.6" lengthAdjust="spacingAndGlyphs">PDF</text>
<rect x="21.7" y="14.2" width="7.4" height="1.9" fill="#ff9a9a"/>
<rect x="21.7" y="18.1" width="7.4" height="1.9" fill="#ff5a5a"/>
<rect x="21.7" y="22.1" width="7.4" height="1.9" fill="#ff1a1a"/>
</svg>
<span class="t" id="r5_name" role="cell" style="left:208.10px;top:36.60px;font-size:28px;font-weight:400;color:#333;letter-spacing:-0.508px">RFI Report</span>
<span class="t" id="r5_type" role="cell" style="left:921.70px;top:36.60px;font-size:28px;font-weight:400;color:#333;letter-spacing:-0.429px">Advanced</span>
<span class="t" id="r5_creator" role="cell" style="left:1220.10px;top:36.60px;font-size:28px;font-weight:400;color:#333;letter-spacing:-0.250px">Robert Hammer</span>
<span class="t" id="r5_created" role="cell" style="left:1660.80px;top:36.60px;font-size:28px;font-weight:400;color:#333;letter-spacing:0.802px">25/02/2026 10:44 am</span>
<span class="t" id="r5_updated" role="cell" style="left:2021.00px;top:36.60px;font-size:28px;font-weight:400;color:#333;letter-spacing:0.855px">25/02/2026 10:44 am</span>
<button type="button" class="abtn" style="left:2381px;top:19px"><svg class="a" style="left:27px;top:16px" width="38" height="28" viewBox="0 0 38 28"><path d="M5.6 12.2l9.5 9 16.5-16.6" fill="none" stroke="#000" stroke-width="4.6" stroke-linecap="round" stroke-linejoin="round"/></svg><span class="t" id="r5_as" style="left:74.20px;top:16.80px;font-size:28px;font-weight:400;color:#000;letter-spacing:-0.331px">Assigned to all</span></button>
<button type="button" class="kebab" aria-label="Row actions" style="left:3184px;top:29px"><svg class="a" style="left:0;top:0" width="20" height="40" viewBox="0 0 20 40"><circle cx="10" cy="9.8" r="3.4"/><circle cx="10" cy="20" r="3.4"/><circle cx="10" cy="30.1" r="3.4"/></svg></button>
</div>
</div>
</div>
</main>

<!-- annotations -->
<div class="obox" style="left:2544px"></div>
<div class="obox" style="left:2878px"></div>
<div class="badge" style="left:2683px">2</div>
<div class="badge" style="left:3007px">1</div>
<svg class="a" style="left:3070px;top:100px" width="300" height="130" viewBox="3070 100 300 130"><path d="M3090.2 129.6L3126 121.8L3124.6 134.6L3341.6 205.2L3338 213.4L3122.4 146.6L3116.2 156.6Z" fill="#ff8500" stroke="#ff8500" stroke-width="4.4" stroke-linejoin="round"/></svg>

<button type="button" id="help" aria-label="Help"><span>?</span></button>

<div class="a" id="redge"></div>
<!-- window corners -->
<svg class="a" style="left:3378px;top:1650px" width="40" height="64" viewBox="3378 1650 40 64"><path d="M3418.5 1655L3418 1660C3417.6 1672 3417 1680 3416.4 1684C3415.6 1689 3414.6 1691.5 3413.5 1693.5C3411.5 1698 3409 1701.5 3406 1704C3403 1707 3400 1709 3396.8 1710.8C3394.5 1712 3392 1713.2 3389 1714.6L3418.5 1714.6Z" fill="#2d2713"/><path d="M3418.5 1655L3418 1660C3417.6 1672 3417 1680 3416.4 1684C3415.6 1689 3414.6 1691.5 3413.5 1693.5C3411.5 1698 3409 1701.5 3406 1704C3403 1707 3400 1709 3396.8 1710.8C3394.5 1712 3392 1713.2 3389 1714.6" fill="none" stroke="#0c0c0c" stroke-width="1.8"/></svg>
<svg class="a" style="left:0;top:1650px" width="40" height="64" viewBox="0 1650 40 64"><path d="M-.5 1656C0 1690 3 1707 33 1714.5L-.5 1714.5Z" fill="#0d1620"/><path d="M-.5 1656C0 1690 3 1707 33 1714.5" fill="none" stroke="#596270" stroke-width="1.6"/></svg>
</body></html>
